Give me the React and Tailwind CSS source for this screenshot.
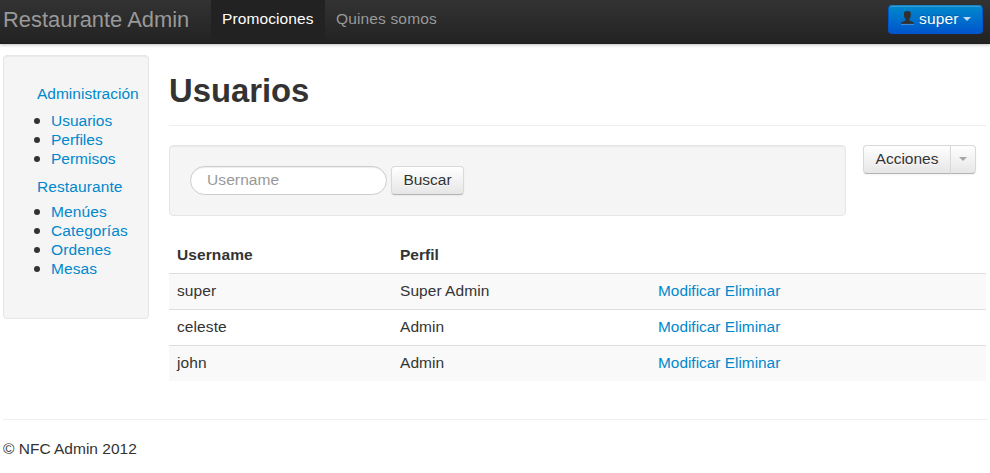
const groups = [
  { title: 'Administración', items: ['Usuarios', 'Perfiles', 'Permisos'], gap: 'mt-[8px]' },
  { title: 'Restaurante', items: ['Menúes', 'Categorías', 'Ordenes', 'Mesas'], gap: 'mt-[6px]' },
];

const users = [
  { name: 'super', profile: 'Super Admin' },
  { name: 'celeste', profile: 'Admin' },
  { name: 'john', profile: 'Admin' },
];

const button =
  'border border-[#d9d9d9] border-b-[#b3b3b3] bg-linear-to-b from-white to-[#e6e6e6] shadow-[inset_0_1px_0_rgba(255,255,255,0.2),0_1px_2px_rgba(0,0,0,0.05)] [text-shadow:0_1px_1px_rgba(255,255,255,0.75)]';

function Navbar() {
  return (
    <header className="flex h-[44px] bg-linear-to-b from-[#333333] to-[#222222] text-[#999999] shadow-[0_1px_3px_rgba(0,0,0,0.25),inset_0_-1px_0_rgba(0,0,0,0.1)]">
      <a className="w-[211px] pl-[3px] text-[21.9px] leading-[39px] whitespace-nowrap">Restaurante Admin</a>
      <nav className="flex h-[40px] leading-[38px]">
        <a className="w-[114px] bg-[#222222] pl-[11px] tracking-[0.1px] text-white">Promociones</a>
        <a className="pl-[11px] tracking-[0.15px]">Quines somos</a>
      </nav>
      <button className="mt-[5px] mr-[7px] ml-auto flex h-[29px] w-[95px] items-start rounded-[4px] border border-[#0055cc] border-t-[#1a80c8] bg-linear-to-b from-[#0088cc] to-[#0055cc] pl-[12px] leading-[25px] text-white shadow-[inset_0_1px_0_rgba(255,255,255,0.2)] [text-shadow:0_-1px_0_rgba(0,0,0,0.25)]">
        <svg className="mt-[5px] h-[14px] w-[13px] shrink-0" viewBox="0 0 13 14">
          <path d="M3 2.400C3 .800 4.200 0 6.400 0s3.400.800 3.400 2.400c.2 2.300-.2 4.400-1.500 5.800v1.400l3.400 1.300c.9.300 1.300.8 1.300 2.100H0c0-1.300.4-1.800 1.300-2.100L4.600 9.600V8.200C3.200 6.800 2.800 4.700 3 2.400z" fill="#303030" />
          <path d="M0 13.400h13" stroke="#5b9bdd" strokeWidth=".8" />
        </svg>
        <span className="ml-[5px] tracking-[0.15px]">super</span>
        <span className="mt-[11px] ml-[4px] border-x-4 border-t-4 border-x-transparent border-t-[#bfdcf5]" />
      </button>
    </header>
  );
}

function Sidebar() {
  return (
    <aside className="h-[264px] w-[146px] shrink-0 rounded-[4px] border border-[#e6e6e6] bg-[#f5f5f5] pt-[28px] pl-[33px] leading-[19px] text-[#0088cc] shadow-[inset_0_1px_1px_rgba(0,0,0,0.05)]">
      {groups.map((group, i) => (
        <section key={group.title} className={i ? 'mt-[9px] tracking-[0.1px]' : ''}>
          <a className="block whitespace-nowrap">{group.title}</a>
          <ul className={group.gap}>
            {group.items.map((item) => (
              <li key={item} className="flex items-center">
                <span className="mt-px mr-[11px] -ml-[3px] size-[6px] rounded-full bg-[#333333]" />
                <a>{item}</a>
              </li>
            ))}
          </ul>
        </section>
      ))}
    </aside>
  );
}

function Toolbar() {
  return (
    <div className="mt-[19px] flex items-start">
      <form className="flex h-[71px] w-[677px] gap-[4px] rounded-[4px] border border-[#e6e6e6] bg-[#f5f5f5] pt-[20px] pl-[20px] shadow-[inset_0_1px_1px_rgba(0,0,0,0.05)]">
        <input
          className="h-[29px] w-[197px] rounded-full border border-[#cccccc] bg-white px-[16px] pb-[2px] tracking-[0.1px] shadow-[inset_0_1px_1px_rgba(0,0,0,0.075)] placeholder:text-[#999999]"
          placeholder="Username"
        />
        <button type="button" className={`${button} h-[29px] w-[73px] rounded-[4px] pb-[2px] leading-[25px]`}>Buscar</button>
      </form>
      <div className="ml-[17px] flex">
        <button className={`${button} h-[29px] w-[88px] rounded-l-[4px] pb-[2px] leading-[25px]`}>Acciones</button>
        <button className={`${button} -ml-px flex h-[29px] w-[26px] justify-center rounded-r-[4px]`}>
          <span className="mt-[11px] border-x-4 border-t-4 border-x-transparent border-t-[#a6a6a6]" />
        </button>
      </div>
    </div>
  );
}

function UserTable() {
  return (
    <table className="mt-[21px] w-[817px] table-fixed border-collapse text-left">
      <thead>
        <tr className="h-[36px]">
          <th className="w-[223px] pl-[8px] tracking-[0.1px]">Username</th>
          <th className="w-[258px] pl-[8px]">Perfil</th>
          <th />
        </tr>
      </thead>
      <tbody>
        {users.map((user) => (
          <tr key={user.name} className="h-[36px] border-t border-[#dddddd] odd:bg-[#f9f9f9]">
            <td className="pb-[2px] pl-[8px] tracking-[0.1px]">{user.name}</td>
            <td className="pb-[2px] pl-[8px] tracking-[0.05px]">{user.profile}</td>
            <td className="pb-[2px] pl-[8px] text-[15.4px] text-[#0088cc]">
              <a>Modificar</a> <a>Eliminar</a>
            </td>
          </tr>
        ))}
      </tbody>
    </table>
  );
}

export default function App() {
  return (
    <div className="h-[473px] overflow-hidden bg-white font-['Liberation_Sans',Arial,sans-serif] text-[15.5px] leading-[19px] text-[#333333]">
      <Navbar />
      <div className="mt-[11px] flex h-[364px] gap-[20px] pl-[3px]">
        <Sidebar />
        <main className="w-[817px]">
          <h1 className="h-[71px] border-b border-[#eeeeee] pt-[16px] text-[32.8px] leading-[40px] font-bold">Usuarios</h1>
          <Toolbar />
          <UserTable />
        </main>
      </div>
      <footer className="ml-[3px] w-[985px] border-t border-[#eeeeee] pt-[19px]">© NFC Admin 2012</footer>
    </div>
  );
}
